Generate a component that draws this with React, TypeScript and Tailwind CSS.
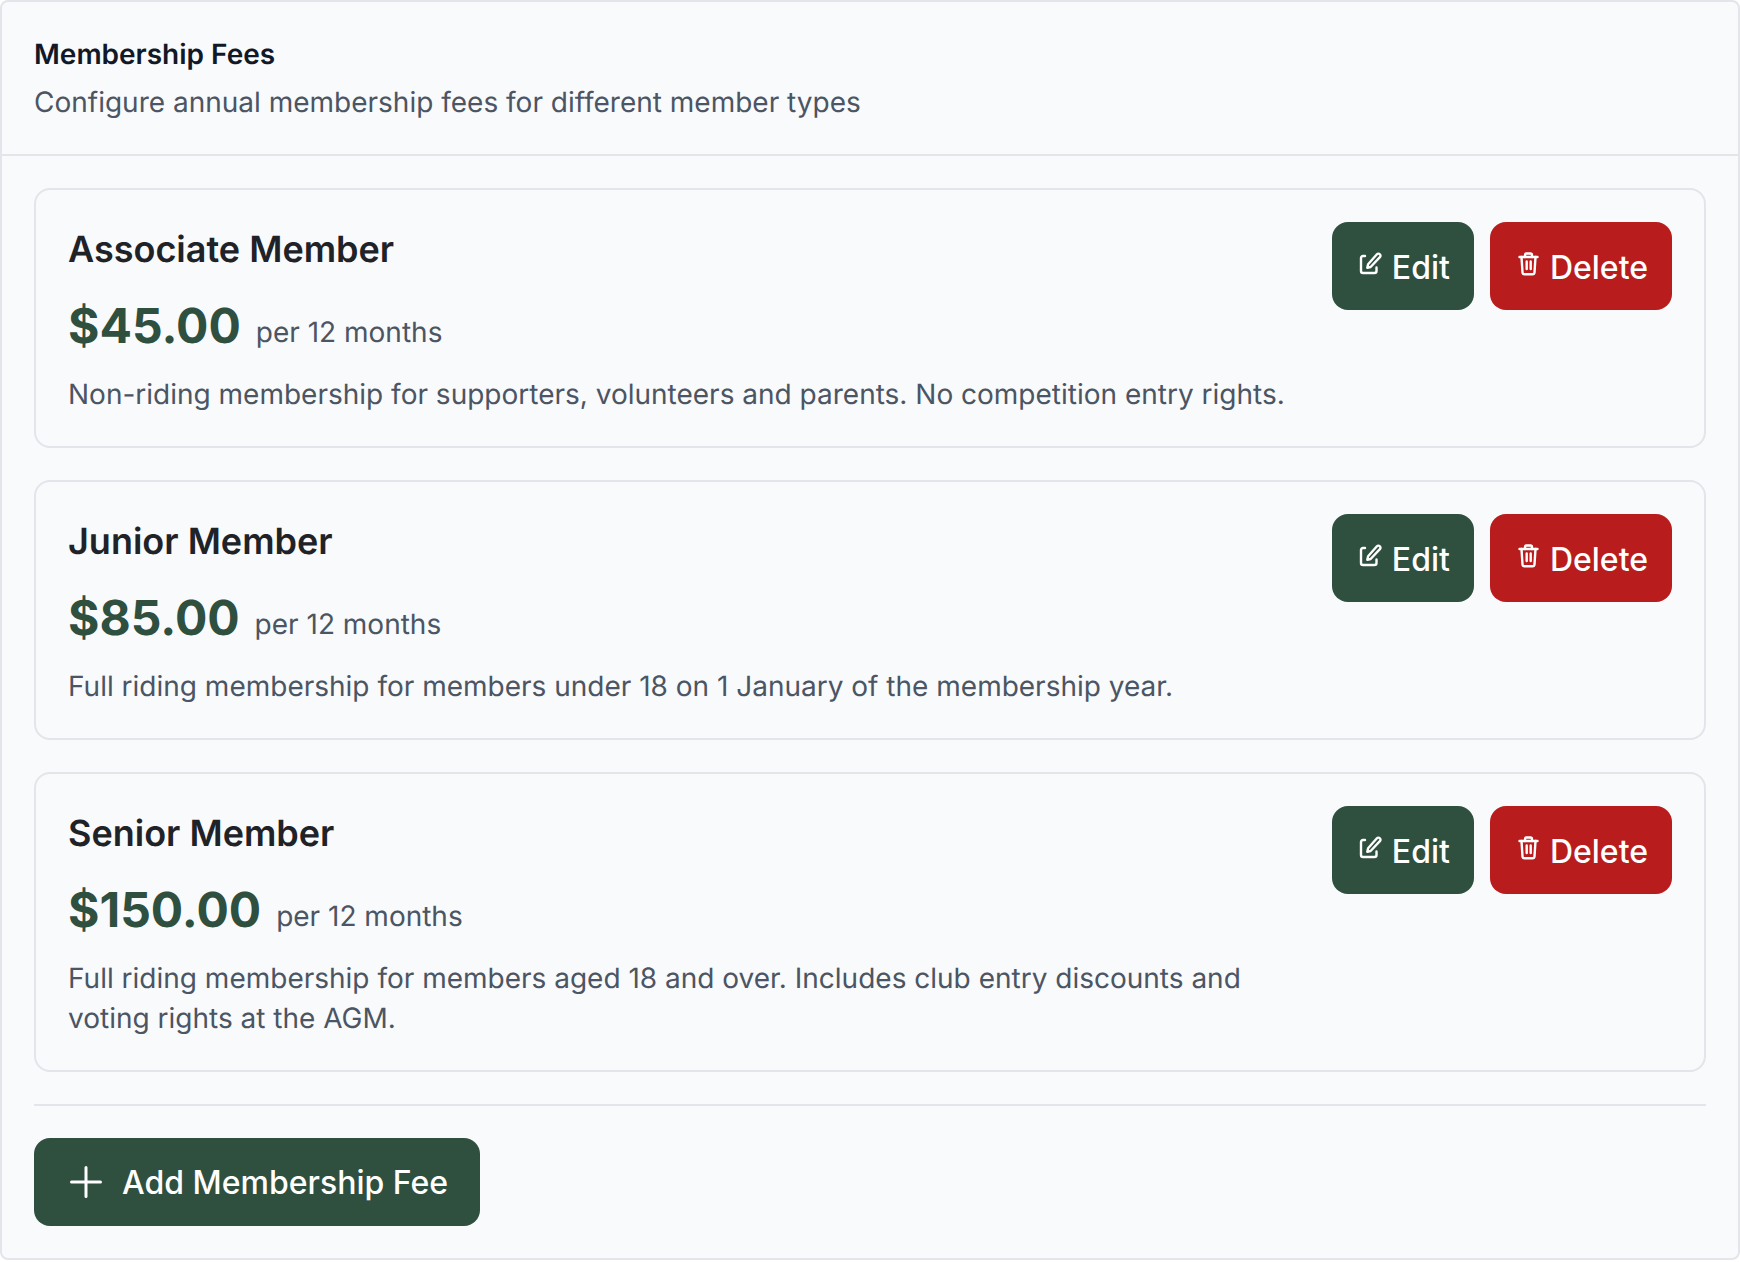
import React from 'react';

const fees = [
  {
    name: 'Associate Member',
    price: '$45.00',
    description: 'Non-riding membership for supporters, volunteers and parents. No competition entry rights.',
  },
  {
    name: 'Junior Member',
    price: '$85.00',
    description: 'Full riding membership for members under 18 on 1 January of the membership year.',
  },
  {
    name: 'Senior Member',
    price: '$150.00',
    description: 'Full riding membership for members aged 18 and over. Includes club entry discounts and voting rights at the AGM.',
  },
];

const EditIcon = () => (
  <svg width="28" height="28" viewBox="0 0 28 28" fill="none" stroke="currentColor" strokeWidth="2.400" strokeLinecap="round" strokeLinejoin="round" className="shrink-0">
    <path d="M9 4H7a2 2 0 0 0-2 2v13a2 2 0 0 0 2 2h11.500a2 2 0 0 0 2-2v-3.500" />
    <path d="M11.300 15.800l.8-3.600L20.900 2.300a2 2 0 0 1 3 2.900L14.600 15z" />
  </svg>
);

const TrashIcon = () => (
  <svg width="28" height="28" viewBox="0 0 28 28" fill="none" stroke="currentColor" strokeWidth="2.400" strokeLinecap="round" strokeLinejoin="round" className="shrink-0">
    <path d="M5.500 5h18" />
    <path d="M7.500 5l1 15.500a2 2 0 0 0 2 1.800h8a2 2 0 0 0 2-1.800l1-15.500" />
    <path d="M11 5V3a1.500 1.500 0 0 1 1.500-1.500h4A1.500 1.500 0 0 1 18 3v2" />
    <path d="M12.700 9.500V17M16.700 9.500V17" />
  </svg>
);

const App: React.FC = () => {
  return (
    <div className="font-['Inter',sans-serif] [text-rendering:geometricPrecision] bg-white min-h-[1262px]">
      <div className="bg-[#f9fafc] border-2 border-[#e3e5ea] rounded-lg">
        <div className="px-8 pt-8 pb-[30px] border-b-2 border-[#e3e5ea]">
          <h2 className="text-[28px] leading-[40px] font-semibold text-[#111827]">Membership Fees</h2>
          <p className="text-[28px] leading-[44px] mt-1.5 text-[#4b5563]">Configure annual membership fees for different member types</p>
        </div>

        <div className="p-8">
          <div className="space-y-8">
            {fees.map((fee) => (
              <div key={fee.name} className="border-2 border-[#e3e5ea] rounded-2xl p-8 flex gap-4 items-start">
                <div className="flex-1 min-w-0">
                  <h3 className="text-[36px] leading-[54px] font-semibold text-[#1f2328]">{fee.name}</h3>
                  <div className="mt-3.5 flex items-baseline">
                    <span className="text-[48px] leading-[72px] font-bold text-[#2f4f3f]">{fee.price}</span>
                    <span className="ml-[15px] -translate-y-px text-[28px] leading-[42px] text-[#4b5563]">per 12 months</span>
                  </div>
                  <p className="mt-3 text-[28px] leading-[40px] text-[#4b5563]">{fee.description}</p>
                </div>

                <div className="flex gap-4 shrink-0">
                  <button className="h-[88px] px-6 rounded-2xl bg-[#2f4f3f] text-white text-[32px] font-medium inline-flex items-center gap-2 whitespace-nowrap">
                    <EditIcon />
                    <span className="pt-[3px]">Edit</span>
                  </button>
                  <button className="h-[88px] px-6 rounded-2xl bg-[#b91c1c] text-white text-[32px] font-medium inline-flex items-center gap-2 whitespace-nowrap">
                    <TrashIcon />
                    <span className="pt-[3px]">Delete</span>
                  </button>
                </div>
              </div>
            ))}
          </div>

          <div className="mt-8 pt-8 border-t-2 border-[#e3e5ea]">
            <button className="h-[88px] px-8 rounded-2xl bg-[#2f4f3f] text-white text-[32px] font-medium inline-flex items-center gap-2 whitespace-nowrap">
              <svg width="48" height="48" viewBox="0 0 48 48" fill="none" stroke="currentColor" strokeWidth="3" strokeLinecap="round">
                <path d="M5.500 24h29M20 9.500v29" />
              </svg>
              <span className="pt-[2px]">Add Membership Fee</span>
            </button>
          </div>
        </div>
      </div>
    </div>
  );
};

export default App;
